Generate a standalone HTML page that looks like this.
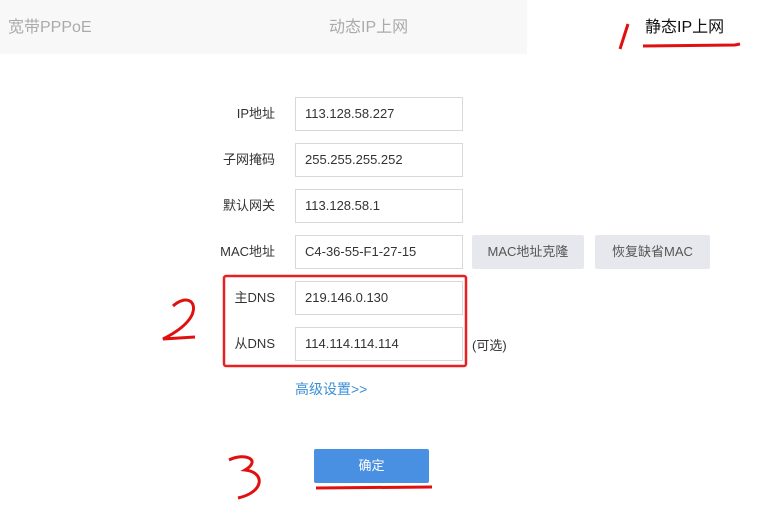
<!DOCTYPE html>
<html><head><meta charset="utf-8"><style>
body{margin:0;width:773px;height:507px;background:#fff;position:relative;overflow:hidden;font-family:"Liberation Sans","Noto Sans CJK SC",sans-serif;font-size:13px;color:#333}
.tabbar{position:absolute;left:0;top:0;width:527px;height:54px;background:#f8f8f8}
.t{position:absolute;top:13px;font-size:16px;color:#aaa}
.lbl{position:absolute;width:100px;left:175px;text-align:right;font-size:13px;color:#333}
.in{position:absolute;left:295px;border:1px solid #d8d8d8;line-height:32px;padding-left:9px;box-sizing:border-box;width:168px;height:34px}
.btn{position:absolute;top:235px;height:34px;background:#e6e8ee;border-radius:2px;color:#555;line-height:34px;text-align:center}
</style></head><body>
<div class="tabbar"></div>
<div class="t" style="left:8px">宽带PPPoE</div>
<div class="t" style="left:329px">动态IP上网</div>
<div class="t" style="left:645px;color:#111">静态IP上网</div>
<svg style="position:absolute;left:0;top:0" width="773" height="507">
<path d="M628 24 L620 49" stroke="#e01010" stroke-width="3" fill="none"/>
<path d="M643 46 L735 45 L740 44" stroke="#e01010" stroke-width="3" fill="none"/>
<rect x="224" y="276" width="242" height="90" fill="none" stroke="#e82020" stroke-width="2.5" rx="2"/>
<path d="M173 306 C185 295 198 300 192 315 C187 325 175 333 163 339 L195 337" stroke="#e01010" stroke-width="3" fill="none"/>
<path d="M229 460 C245 452 262 460 245 470 C265 472 265 492 238 498" stroke="#e01010" stroke-width="3" fill="none"/>
<path d="M316 488 L432 487" stroke="#e01010" stroke-width="3" fill="none"/>
</svg>
<div class="lbl" style="top:103px">IP地址</div><div class="in" style="top:97px">113.128.58.227</div>
<div class="lbl" style="top:149px">子网掩码</div><div class="in" style="top:143px">255.255.255.252</div>
<div class="lbl" style="top:195px">默认网关</div><div class="in" style="top:189px">113.128.58.1</div>
<div class="lbl" style="top:241px">MAC地址</div><div class="in" style="top:235px">C4-36-55-F1-27-15</div>
<div class="btn" style="left:472px;width:112px">MAC地址克隆</div>
<div class="btn" style="left:595px;width:115px">恢复缺省MAC</div>
<div class="lbl" style="top:287px">主DNS</div><div class="in" style="top:281px">219.146.0.130</div>
<div class="lbl" style="top:333px">从DNS</div><div class="in" style="top:327px">114.114.114.114</div>
<div style="position:absolute;left:472px;top:335px">(可选)</div>
<div style="position:absolute;left:295px;top:379px;color:#3b8fd6;font-size:14px">高级设置&gt;&gt;</div>
<div style="position:absolute;left:314px;top:449px;width:115px;height:34px;background:#4a90e2;color:#fff;line-height:34px;text-align:center;border-radius:2px">确定</div>
</body></html>
